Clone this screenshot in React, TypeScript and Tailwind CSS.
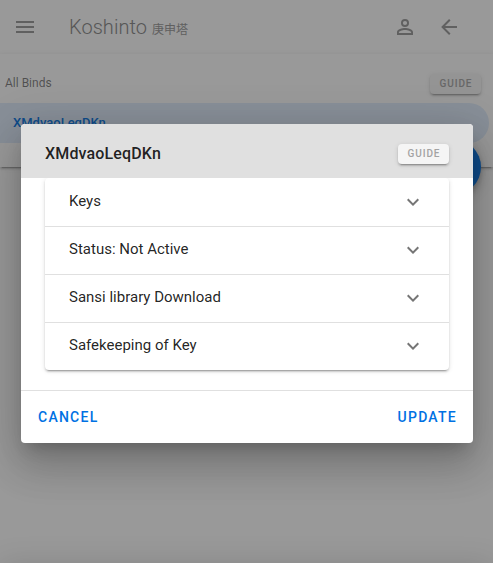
import React from "react";

const rows = ["Keys", "Status: Not Active", "Sansi library Download", "Safekeeping of Key"];

const Icon = ({ d, className = "" }: { d: string; className?: string }) => (
  <svg viewBox="0 0 24 24" className={`h-6 w-6 shrink-0 fill-current ${className}`}>
    <path d={d} />
  </svg>
);

const raised =
  "shadow-[0_3px_1px_-2px_rgba(0,0,0,.2),0_2px_2px_0_rgba(0,0,0,.14),0_1px_5px_0_rgba(0,0,0,.12)]";

const Guide = () => (
  <button
    className={`h-5 w-[51px] rounded bg-[#f5f5f5] pl-px text-center text-[10px] leading-5 font-medium tracking-[0.893px] text-[#a3a3a3] ${raised}`}
  >
    GUIDE
  </button>
);

export default function App() {
  return (
    <div className="relative h-[563px] w-[493px] overflow-hidden bg-white font-[Roboto,'Noto_Sans_CJK_JP',sans-serif] text-black/87 antialiased">
      <header className="relative flex h-[54px] items-center bg-white pr-8 pl-[13px] text-[#979797] shadow-[0_1px_3px_rgba(0,0,0,.08)]">
        <Icon d="M3 6h18v2H3zm0 5h18v2H3zm0 5h18v2H3z" />
        <h1 className="ml-8 flex-1 pt-[2px] text-[20px] leading-8 font-light tracking-[0.05px] text-[#858585]">
          Koshinto <span className="text-[12px] font-normal tracking-normal text-[#959595]">庚申塔</span>
        </h1>
        <Icon
          className="mr-5"
          d="M12 4a4 4 0 1 1 0 8 4 4 0 0 1 0-8m0 1.9a2.1 2.1 0 1 0 0 4.2 2.1 2.1 0 0 0 0-4.2M12 13c2.67 0 8 1.33 8 4v3H4v-3c0-2.67 5.33-4 8-4m0 1.9c-2.97 0-6.1 1.46-6.1 2.1v1.1h12.2V17c0-.64-3.13-2.1-6.1-2.1"
        />
        <Icon d="M20 11v2H8l5.5 5.5-1.42 1.42L4.16 12l7.92-7.92L13.5 5.5 8 11z" />
      </header>
      <main className={`relative h-[113px] bg-white pt-5 ${raised}`}>
        <div className="flex h-[29px] items-start justify-between pr-3 pl-[5px] text-[12px] leading-[19px] text-black/54">
          <span>All Binds</span>
          <Guide />
        </div>
        <div className="mr-1 h-10 rounded-r-[20px] bg-[#dfedfd] pl-[13px] text-[13px] leading-10 font-medium text-[#0071e3]">
          XMdvaoLeqDKn
        </div>
        <div className="absolute top-[85px] right-3 h-14 w-14 rounded-full bg-[#0071e3] shadow-[0_3px_5px_-1px_rgba(0,0,0,.2),0_6px_10px_0_rgba(0,0,0,.14),0_1px_18px_0_rgba(0,0,0,.12)]" />
      </main>
      <div className="absolute inset-0 flex items-start bg-[#212121]/46 pt-[124px] pl-[21px]">
        <div className="absolute inset-x-0 top-full h-10 shadow-[0_0_30px_rgba(0,0,0,.12)]" />
        <section className="relative h-[319px] w-[452px] shrink-0 rounded bg-white shadow-[0_11px_15px_-7px_rgba(0,0,0,.2),0_24px_38px_3px_rgba(0,0,0,.14),0_9px_46px_8px_rgba(0,0,0,.12)]">
          <div className="relative z-10 flex h-[54px] items-center justify-between rounded-t bg-[#e0e0e0] px-6 pt-[6px]">
            <h2 className="text-[16px] leading-6 font-medium tracking-[0.15px]">XMdvaoLeqDKn</h2>
            <Guide />
          </div>
          <div className="h-[212px] px-6">
            <div className={`rounded bg-white ${raised}`}>
              {rows.map((label, i) => (
                <div
                  key={label}
                  className={`flex h-12 items-center justify-between px-6 text-[15px] leading-none ${i ? "border-t border-black/12" : ""}`}
                >
                  <span className="mb-[2px]">{label}</span>
                  <Icon
                    className={i ? "mb-px text-black/54" : "text-black/54"}
                    d="M7.41 8.58 12 13.17l4.59-4.59L18 10l-6 6-6-6z"
                  />
                </div>
              ))}
            </div>
          </div>
          <footer className="flex h-[53px] items-center justify-between border-t border-black/12 pt-px pr-4 pl-[17px] text-[14px] font-medium tracking-[1.25px] text-[#0071e3]">
            <button>CANCEL</button>
            <button>UPDATE</button>
          </footer>
        </section>
      </div>
    </div>
  );
}
